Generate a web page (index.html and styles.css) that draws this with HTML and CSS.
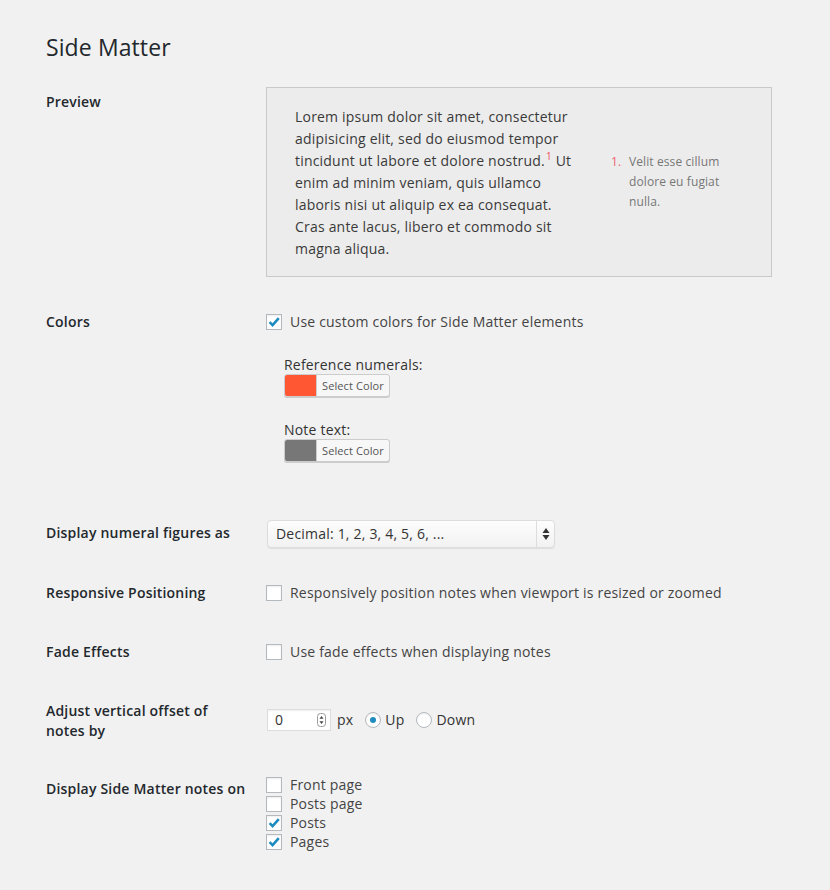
FILE: index.html
```html
<!DOCTYPE html>
<html>
<head>
<meta charset="utf-8">
<link rel="stylesheet" href="styles.css">
</head>
<body>
<div class="wrap">
  <h1 class="title">Side Matter</h1>

  <div class="row">
    <div class="th">Preview</div>
    <div class="td td-preview">
      <div class="preview">
        <p class="preview-text">Lorem ipsum dolor sit amet, consectetur adipisicing elit, sed do eiusmod tempor tincidunt ut labore et dolore nostrud.<sup class="ref">1</sup> Ut enim ad minim veniam, quis ullamco laboris nisi ut aliquip ex ea consequat. Cras ante lacus, libero et commodo sit magna aliqua.</p>
        <div class="notes">
          <span class="note-num">1.</span>
          <span class="note-text">Velit esse cillum dolore eu fugiat nulla.</span>
        </div>
      </div>
    </div>
  </div>

  <div class="row">
    <div class="th">Colors</div>
    <div class="td td-colors">
      <div class="check-line">
        <span class="cb checked"><svg viewBox="0 0 16 16" width="16" height="16"><path d="M3.6 8.2 L6.6 11.2 L12.8 4.2" fill="none" stroke="#1e8cbe" stroke-width="2.6"/></svg></span>
        <span>Use custom colors for Side Matter elements</span>
      </div>
      <div class="color-group">
        <div class="color-label first">Reference numerals:</div>
        <div class="color-btn"><span class="swatch swatch-red"></span><span class="btn-text">Select Color</span></div>
        <div class="color-label">Note text:</div>
        <div class="color-btn"><span class="swatch swatch-gray"></span><span class="btn-text">Select Color</span></div>
      </div>
    </div>
  </div>

  <div class="row">
    <div class="th">Display numeral figures as</div>
    <div class="td td-select">
      <div class="select">
        <span class="select-value">Decimal: 1, 2, 3, 4, 5, 6, ...</span>
        <span class="select-arrows"><svg viewBox="0 0 8 14" width="8" height="14"><path d="M4 1 L7.5 6 L0.5 6 Z" fill="#333"/><path d="M4 13 L7.5 8 L0.5 8 Z" fill="#333"/></svg></span>
      </div>
    </div>
  </div>

  <div class="row">
    <div class="th th-short">Responsive Positioning</div>
    <div class="td td-check">
      <div class="check-line"><span class="cb"></span><span>Responsively position notes when viewport is resized or zoomed</span></div>
    </div>
  </div>

  <div class="row">
    <div class="th th-short">Fade Effects</div>
    <div class="td td-check">
      <div class="check-line"><span class="cb"></span><span>Use fade effects when displaying notes</span></div>
    </div>
  </div>

  <div class="row">
    <div class="th th-offset">Adjust vertical offset of notes by</div>
    <div class="td td-offset">
      <div class="offset-line">
        <div class="number">
          <span class="number-value">0</span>
          <span class="spinner"><svg viewBox="0 0 9 14" width="9" height="14"><rect x="0.5" y="0.5" width="8" height="13" rx="3" fill="#fff" stroke="#999"/><path d="M4.5 3 L6.5 5.8 L2.5 5.8 Z" fill="#444"/><path d="M4.5 11 L6.5 8.2 L2.5 8.2 Z" fill="#444"/></svg></span>
        </div>
        <span class="px">px</span>
        <span class="radio checked"><span class="dot"></span></span>
        <span class="radio-label">Up</span>
        <span class="radio"></span>
        <span class="radio-label">Down</span>
      </div>
    </div>
  </div>

  <div class="row">
    <div class="th">Display Side Matter notes on</div>
    <div class="td td-list">
      <div class="list-line"><span class="cb"></span><span>Front page</span></div>
      <div class="list-line"><span class="cb"></span><span>Posts page</span></div>
      <div class="list-line"><span class="cb checked"><svg viewBox="0 0 16 16" width="16" height="16"><path d="M3.6 8.2 L6.6 11.2 L12.8 4.2" fill="none" stroke="#1e8cbe" stroke-width="2.6"/></svg></span><span>Posts</span></div>
      <div class="list-line"><span class="cb checked"><svg viewBox="0 0 16 16" width="16" height="16"><path d="M3.6 8.2 L6.6 11.2 L12.8 4.2" fill="none" stroke="#1e8cbe" stroke-width="2.6"/></svg></span><span>Pages</span></div>
    </div>
  </div>
</div>
</body>
</html>
```

FILE: styles.css
```css
html, body {
  margin: 0;
  padding: 0;
  background: #f1f1f1;
}
body {
  font-family: "Open Sans", "Noto Sans", sans-serif;
  font-size: 14px;
  letter-spacing: 0.2px;
  color: #444;
}
.wrap {
  padding-left: 46px;
  padding-top: 33px;
}
.title {
  margin: 0 0 10px;
  font-size: 23px;
  line-height: 29px;
  font-weight: 400;
  letter-spacing: 0.1px;
  color: #23282d;
}
.row {
  display: flex;
  align-items: flex-start;
}
.th {
  width: 220px;
  flex: none;
  font-weight: 600;
  line-height: 20px;
  color: #23282d;
  padding: 20px 0;
}
.th-short {
  padding-bottom: 19px;
}
.th-offset {
  width: 180px;
  margin-right: 40px;
  padding-bottom: 18px;
}
.td {
  flex: none;
  line-height: 20px;
  color: #444;
}
.td-preview {
  padding: 15px 0;
}
.preview {
  box-sizing: border-box;
  width: 506px;
  height: 190px;
  border: 1px solid #c9c9c9;
  background: #ececec;
  display: flex;
  align-items: flex-start;
  padding: 18px 0 0 28px;
}
.preview-text {
  margin: 0;
  width: 284px;
  flex: none;
  font-size: 14px;
  line-height: 22px;
  color: #3a3a3a;
}
.ref {
  color: #f0535f;
  font-size: 10px;
  line-height: 0;
  vertical-align: 6px;
  margin-left: 1px;
}
.notes {
  display: flex;
  margin-left: 32px;
  margin-top: 46px;
  font-size: 12px;
  line-height: 20px;
  letter-spacing: 0.1px;
  color: #777;
}
.note-num {
  color: #f2636e;
  width: 18px;
  flex: none;
}
.note-text {
  width: 120px;
}
.td-colors {
  padding: 20px 0 41px;
}
.check-line {
  display: flex;
  align-items: center;
  height: 20px;
}
.cb {
  box-sizing: border-box;
  width: 16px;
  height: 16px;
  flex: none;
  border: 1px solid #b4b9be;
  background: #fff;
  box-shadow: inset 0 1px 2px rgba(0,0,0,0.07);
  margin-right: 8px;
  position: relative;
}
.cb svg {
  position: absolute;
  left: -1px;
  top: -1px;
}
.color-group {
  margin-left: 18px;
}
.color-label {
  line-height: 19px;
  margin-top: 23px;
  color: #333;
}
.color-btn {
  box-sizing: border-box;
  display: flex;
  width: 106px;
  height: 23px;
  border: 1px solid #ccc;
  border-radius: 3px;
  background: #f7f7f7;
  box-shadow: 0 1px 0 #ccc;
  overflow: hidden;
}
.swatch {
  width: 31px;
  height: 100%;
  flex: none;
  border-right: 1px solid #ccc;
}
.swatch-red {
  background: #ff5733;
}
.swatch-gray {
  background: #777;
}
.btn-text {
  font-size: 11px;
  line-height: 21px;
  letter-spacing: 0.1px;
  color: #555;
  padding-left: 5px;
}
.td-select {
  padding: 17px 0 15px 1px;
}
.select {
  box-sizing: border-box;
  width: 288px;
  height: 28px;
  border: 1px solid #ddd;
  border-radius: 4px;
  background: linear-gradient(#fdfdfd, #f2f2f2);
  box-shadow: 0 1px 1px rgba(0,0,0,0.08);
  display: flex;
  align-items: center;
}
.select-value {
  flex: 1;
  padding-left: 8px;
  color: #333;
  line-height: 26px;
}
.select-arrows {
  width: 17px;
  height: 26px;
  border-left: 1px solid #ddd;
  display: flex;
  align-items: center;
  justify-content: center;
}
.td-check {
  padding: 20px 0 19px;
}
.td-offset {
  padding-top: 28px;
}
.offset-line {
  display: flex;
  align-items: center;
  height: 22px;
  margin-left: 1px;
}
.number {
  box-sizing: border-box;
  width: 64px;
  height: 22px;
  border: 1px solid #ddd;
  background: #fff;
  box-shadow: inset 0 1px 2px rgba(0,0,0,0.07);
  display: flex;
  align-items: center;
  justify-content: space-between;
  padding: 0 4px 0 7px;
  color: #333;
}
.number-value {
  line-height: 20px;
}
.spinner {
  display: flex;
}
.px {
  margin-left: 6px;
  color: #333;
}
.radio {
  box-sizing: border-box;
  width: 16px;
  height: 16px;
  border: 1px solid #b4b9be;
  border-radius: 50%;
  background: #fff;
  box-shadow: inset 0 1px 2px rgba(0,0,0,0.07);
  margin-left: 12px;
  display: flex;
  align-items: center;
  justify-content: center;
}
.radio .dot {
  width: 6px;
  height: 6px;
  border-radius: 50%;
  background: #1e8cbe;
}
.radio-label {
  margin-left: 4px;
  color: #333;
}
.td-list {
  padding-top: 16px;
}
.list-line {
  display: flex;
  align-items: center;
  height: 19px;
}
```
